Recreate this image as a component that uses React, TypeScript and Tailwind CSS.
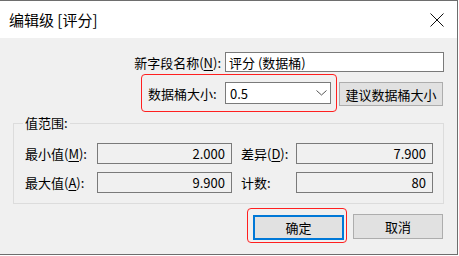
import React from "react";

const font = { fontFamily: '"Noto Sans CJK SC", "Liberation Sans", sans-serif' };

function U({ c }: { c: string }) {
  return <span className="underline underline-offset-2">{c}</span>;
}

function ReadField({ value, w }: { value: string; w: string }) {
  return (
    <div
      className={`${w} h-[21px] border border-[#7a7a7a] bg-[#f0f0f0] flex items-center justify-end pr-[6px] text-[13px] leading-none`}
    >
      {value}
    </div>
  );
}

export default function App() {
  return (
    <div className="w-[459px] h-[256px] bg-white" style={font}>
      <div className="w-[458px] h-[255px] border-t border-r border-b border-[#6e6e6e] flex flex-col text-black">
        {/* title bar */}
        <div className="h-[37px] bg-white flex items-center justify-between pl-[9px] pr-[13px]">
          <span className="text-[15px] leading-none">编辑级 [评分]</span>
          <svg width="14" height="14" viewBox="0 0 14 14">
            <path d="M0.5 0.5 L13.5 13.5 M13.5 0.5 L0.5 13.5" stroke="#111" strokeWidth="1" />
          </svg>
        </div>

        {/* body */}
        <div className="flex-1 bg-[#f0f0f0] flex flex-col">
          {/* field name */}
          <div className="flex items-center mt-[14px] h-[20px]">
            <div className="w-[221px] text-right text-[13px] leading-none">
              新字段名称(<U c="N" />):
            </div>
            <div className="ml-[4px] w-[219px] h-[20px] border border-[#7a7a7a] bg-white flex items-center pl-[3px] text-[13px] leading-none">
              评分 (数据桶)
            </div>
          </div>

          {/* bucket size */}
          <div className="flex items-center mt-[2px] ml-[141px]">
            <div className="w-[196px] h-[38px] border border-[#ff1f1f] rounded-[4px] flex items-center">
              <span className="ml-[6px] w-[77px] text-[13px] leading-none">数据桶大小:</span>
              <div className="w-[106px] h-[22px] border border-[#7a7a7a] bg-white flex items-center justify-between pl-[4px] pr-[3px] text-[13px] leading-none">
                <span>0.5</span>
                <svg width="11" height="6" viewBox="0 0 11 6">
                  <path d="M0.5 0.5 L5.5 5 L10.5 0.5" fill="none" stroke="#555" strokeWidth="1" />
                </svg>
              </div>
            </div>
            <button className="ml-[2px] mt-[2px] w-[104px] h-[24px] border border-[#adadad] bg-[#e1e1e1] text-[13px] leading-none">
              建议数据桶大小
            </button>
          </div>

          {/* value range group */}
          <div className="relative mt-[11px] ml-[13px] w-[431px] h-[81px] border border-[#dcdcdc]">
            <span className="absolute -top-[9px] left-[9px] px-[2px] bg-[#f0f0f0] text-[13px] leading-[16px]">
              值范围:
            </span>
            <div className="flex flex-col gap-[8px] pt-[19px]">
              <div className="flex items-center">
                <span className="ml-[11px] w-[72px] text-[13px] leading-none">
                  最小值(<U c="M" />):
                </span>
                <ReadField value="2.000" w="w-[135px]" />
                <span className="ml-[9px] w-[55px] text-[13px] leading-none">
                  差异(<U c="D" />):
                </span>
                <ReadField value="7.900" w="w-[137px]" />
              </div>
              <div className="flex items-center">
                <span className="ml-[11px] w-[72px] text-[13px] leading-none">
                  最大值(<U c="A" />):
                </span>
                <ReadField value="9.900" w="w-[135px]" />
                <span className="ml-[9px] w-[55px] text-[13px] leading-none">计数:</span>
                <ReadField value="80" w="w-[137px]" />
              </div>
            </div>
          </div>

          {/* buttons */}
          <div className="flex items-start mt-[4px] ml-[247px]">
            <div className="w-[100px] h-[35px] border border-[#ff1f1f] rounded-[4px] pl-[5px] pt-[5px]">
              <button className="w-[91px] h-[25px] border-2 border-[#0078d7] bg-[#e1e1e1] text-[13px] leading-none">
                确定
              </button>
            </div>
            <button className="ml-[6px] mt-[6px] w-[90px] h-[25px] border border-[#adadad] bg-[#e1e1e1] text-[13px] leading-none">
              取消
            </button>
          </div>
        </div>
      </div>
    </div>
  );
}
